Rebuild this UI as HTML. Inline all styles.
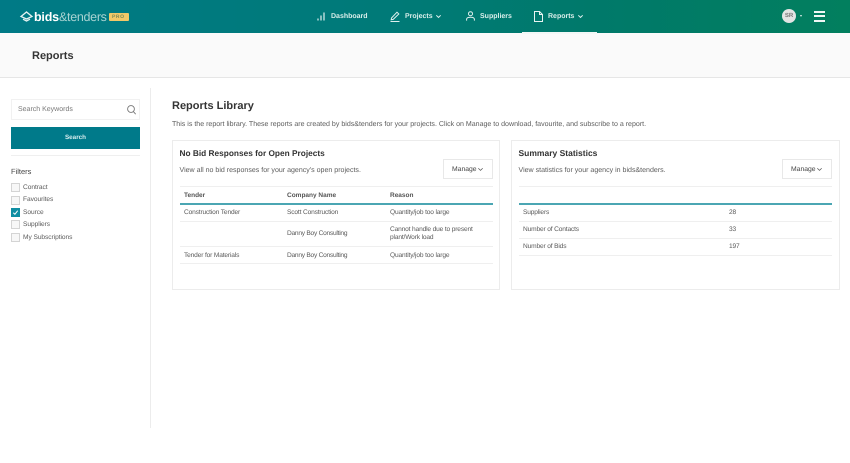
<!DOCTYPE html>
<html><head><meta charset="utf-8"><title>Reports</title>
<style>
html,body{margin:0;padding:0;background:#fff;}
body{width:850px;height:463px;position:relative;overflow:hidden;font-family:"Liberation Sans",sans-serif;color:#555;text-rendering:geometricPrecision;}
.t{position:absolute;white-space:nowrap;font-size:6.6px;letter-spacing:-.05px;line-height:10px;color:#5a5a5a;}
.c{letter-spacing:-.15px;}
.dn{letter-spacing:-.25px;}
.b{position:absolute;}
.nav{color:#d8eeea;font-size:7px;font-weight:bold;line-height:10px;letter-spacing:0;}
.h{font-size:8.3px;font-weight:bold;color:#333;line-height:12px;letter-spacing:0;}
.d{font-size:7.05px;color:#5c5c5c;letter-spacing:0;}
.th{font-weight:bold;color:#555;font-size:6.5px;letter-spacing:0;}
.line{position:absolute;height:1px;background:#efefef;}
.teal{position:absolute;height:2px;background:#4ba6b3;}
.card{position:absolute;background:#fff;border:1px solid #ececec;box-sizing:border-box;}
.mg{position:absolute;width:50px;height:20px;background:#fff;border:1px solid #e8e8e8;box-sizing:border-box;font-size:6.8px;color:#444;line-height:19px;padding-left:8px;}
.cb{position:absolute;left:11px;width:9px;height:9px;background:#f7f7f7;border:1px solid #d4d4d4;box-sizing:border-box;}
svg{position:absolute;overflow:visible;}
</style></head><body>
<div class="b" style="left:0;top:0;width:850px;height:33px;background:linear-gradient(90deg,#007a86 0%,#007a78 45%,#00796a 70%,#027f5e 100%);"></div>
<div class="b" style="left:0;top:33px;width:850px;height:45px;background:#fafafa;border-bottom:1px solid #e6e6e6;box-sizing:border-box;"></div>

<!-- logo -->
<svg style="left:20px;top:11px" width="13" height="11" viewBox="0 0 13 11" fill="none" stroke="#e6f3f2" stroke-width="1.3"><path d="M1 5.5 6.5 1 12 5.5 6.5 8Z"/><path d="M3 8.2 6.5 10 10 8.2"/></svg>
<span class="t" style="left:34px;top:10px;font-size:12.5px;line-height:14px;font-weight:bold;color:#fff;letter-spacing:-.2px;">bids</span>
<span class="t" style="left:59px;top:10px;font-size:12.5px;line-height:14px;color:#a9d3d2;letter-spacing:-.3px;">&amp;tenders</span>
<div class="b" style="left:109px;top:13px;width:20px;height:8px;background:#f2c868;border-radius:1px;"></div>
<span class="t" style="left:112px;top:13px;font-size:5px;line-height:8px;font-weight:bold;color:#7c8a55;letter-spacing:.6px;">PRO</span>

<!-- nav -->
<svg style="left:317px;top:12px" width="8" height="9" viewBox="0 0 8 9" stroke="#dff0ee" stroke-width="1.2" fill="none"><path d="M1 6.5V8.5M4 3.5V8.5M7 .5V8.5"/></svg>
<span class="t nav" style="left:331px;top:11.5px;">Dashboard</span>
<svg style="left:390px;top:11px" width="10" height="11" viewBox="0 0 10 11" stroke="#dff0ee" stroke-width="1" fill="none"><path d="M1.5 7 7 1.2 8.8 3 3.2 8.4 1.2 8.8Z"/><path d="M.5 10.5H9.5"/></svg>
<span class="t nav" style="left:405px;top:12px;">Projects</span>
<svg style="left:436px;top:15px" width="5" height="3" viewBox="0 0 5 3" stroke="#dff0ee" stroke-width="1" fill="none"><path d="M.3.3 2.5 2.4 4.7.3"/></svg>
<svg style="left:466px;top:11px" width="9" height="10" viewBox="0 0 9 10" stroke="#dff0ee" stroke-width="1" fill="none"><circle cx="4.5" cy="2.7" r="2"/><path d="M.6 9.6V8.4C.6 7 1.8 6.3 4.5 6.3S8.4 7 8.4 8.4V9.6"/></svg>
<span class="t nav" style="left:480px;top:11.5px;">Suppliers</span>
<svg style="left:534px;top:11px" width="9" height="11" viewBox="0 0 9 11" stroke="#e8f4f2" stroke-width="1" fill="none"><path d="M.5.5H5.5L8.5 3.5V10.5H.5Z"/><path d="M5.5.5V3.5H8.5"/></svg>
<span class="t nav" style="left:548px;top:12px;">Reports</span>
<svg style="left:578px;top:15px" width="5" height="3" viewBox="0 0 5 3" stroke="#dff0ee" stroke-width="1" fill="none"><path d="M.3.3 2.5 2.4 4.7.3"/></svg>
<div class="b" style="left:522px;top:32px;width:75px;height:2px;background:#f2f7f6;"></div>

<!-- user -->
<div class="b" style="left:782px;top:9px;width:14px;height:14px;border-radius:50%;background:#e2e4e3;color:#777;font-size:6px;font-weight:bold;line-height:14px;text-align:center;">SR</div>
<div class="b" style="left:800px;top:15px;width:0;height:0;border-left:1.5px solid transparent;border-right:1.5px solid transparent;border-top:2px solid #e6f2ef;"></div>
<div class="b" style="left:814px;top:11px;width:11px;height:2px;background:#f0f7f5;"></div>
<div class="b" style="left:814px;top:15px;width:11px;height:2px;background:#f0f7f5;"></div>
<div class="b" style="left:814px;top:19.5px;width:11px;height:2px;background:#f0f7f5;"></div>

<span class="t" style="left:32px;top:49px;font-size:11px;line-height:14px;font-weight:bold;color:#333;letter-spacing:0;">Reports</span>

<!-- sidebar -->
<div class="b" style="left:150px;top:88px;width:1px;height:340px;background:#ececec;"></div>
<div class="b" style="left:11px;top:99px;width:129px;height:21px;background:#fff;border:1px solid #f1f1f1;box-sizing:border-box;"></div>
<span class="t" style="left:18px;top:104.5px;font-size:7px;color:#777;letter-spacing:0;">Search Keywords</span>
<svg style="left:127px;top:105px" width="9" height="10" viewBox="0 0 9 10" stroke="#777" stroke-width=".9" fill="none"><circle cx="4" cy="4" r="3.4"/><path d="M6.5 6.7 8.7 9.2"/></svg>
<div class="b" style="left:11px;top:127px;width:129px;height:21.5px;background:#007a8a;color:#d8eef0;font-size:6.3px;font-weight:bold;line-height:21px;text-align:center;">Search</div>
<div class="line" style="left:11px;top:155px;width:129px;"></div>
<span class="t" style="left:11px;top:166.5px;font-size:7.5px;color:#444;letter-spacing:0;">Filters</span>
<div class="cb" style="top:183px;"></div><span class="t" style="left:23px;top:182.5px;">Contract</span>
<div class="cb" style="top:195.5px;"></div><span class="t" style="left:23px;top:195px;">Favourites</span>
<div class="cb" style="top:208px;background:#108ea3;border-color:#108ea3;"></div>
<svg style="left:13px;top:210px" width="5" height="5" viewBox="0 0 5 5" stroke="#fff" stroke-width="1" fill="none"><path d="M.3 2.8 1.9 4.3 4.7.7"/></svg>
<span class="t" style="left:23px;top:207.5px;">Source</span>
<div class="cb" style="top:220px;"></div><span class="t" style="left:23px;top:220px;">Suppliers</span>
<div class="cb" style="top:232.5px;"></div><span class="t" style="left:23px;top:232.5px;">My Subscriptions</span>

<!-- main -->
<span class="t" style="left:172px;top:99px;font-size:11px;line-height:15px;font-weight:bold;color:#333;letter-spacing:0;">Reports Library</span>
<span class="t d" style="left:172px;top:120px;">This is the report library. These reports are created by bids&amp;tenders for your projects. Click on Manage to download, favourite, and subscribe to a report.</span>

<!-- card 1 -->
<div class="card" style="left:172px;top:140px;width:328px;height:150px;"></div>
<span class="t h" style="left:179.5px;top:147px;">No Bid Responses for Open Projects</span>
<span class="t d" style="left:179.5px;top:165.5px;">View all no bid responses for your agency's open projects.</span>
<div class="mg" style="left:443px;top:159px;">Manage</div>
<svg style="left:478px;top:168px" width="5" height="3" viewBox="0 0 5 3" stroke="#555" stroke-width=".7" fill="none"><path d="M.3.3 2.5 2.4 4.7.3"/></svg>
<div class="line" style="left:179.5px;top:186px;width:313px;"></div>
<span class="t th" style="left:184px;top:190.5px;">Tender</span>
<span class="t th" style="left:287px;top:190.5px;">Company Name</span>
<span class="t th" style="left:390px;top:190.5px;">Reason</span>
<div class="teal" style="left:179.5px;top:203px;width:313px;"></div>
<span class="t c" style="left:184px;top:207.5px;">Construction Tender</span>
<span class="t c" style="left:287px;top:207.5px;">Scott Construction</span>
<span class="t c" style="left:390px;top:207.5px;">Quantity/job too large</span>
<div class="line" style="left:179.5px;top:221px;width:313px;"></div>
<span class="t dn" style="left:287px;top:229px;">Danny Boy Consulting</span>
<span class="t c" style="left:390px;top:225.5px;line-height:8px;">Cannot handle due to present<br>plant/Work load</span>
<div class="line" style="left:179.5px;top:246px;width:313px;"></div>
<span class="t c" style="left:184px;top:250.5px;">Tender for Materials</span>
<span class="t dn" style="left:287px;top:250.5px;">Danny Boy Consulting</span>
<span class="t c" style="left:390px;top:250.5px;">Quantity/job too large</span>
<div class="line" style="left:179.5px;top:263px;width:313px;"></div>

<!-- card 2 -->
<div class="card" style="left:511px;top:140px;width:329px;height:150px;"></div>
<span class="t h" style="left:518.5px;top:147px;font-size:8.5px;">Summary Statistics</span>
<span class="t d" style="left:518.5px;top:165.5px;">View statistics for your agency in bids&amp;tenders.</span>
<div class="mg" style="left:782px;top:159px;">Manage</div>
<svg style="left:817px;top:168px" width="5" height="3" viewBox="0 0 5 3" stroke="#555" stroke-width=".7" fill="none"><path d="M.3.3 2.5 2.4 4.7.3"/></svg>
<div class="line" style="left:518.5px;top:186px;width:313px;"></div>
<div class="teal" style="left:518.5px;top:203px;width:313px;"></div>
<span class="t c" style="left:523px;top:207.5px;">Suppliers</span>
<span class="t c" style="left:729px;top:207.5px;">28</span>
<div class="line" style="left:518.5px;top:221px;width:313px;"></div>
<span class="t c" style="left:523px;top:225px;">Number of Contacts</span>
<span class="t c" style="left:729px;top:225px;">33</span>
<div class="line" style="left:518.5px;top:238px;width:313px;"></div>
<span class="t c" style="left:523px;top:242px;">Number of Bids</span>
<span class="t c" style="left:729px;top:242px;">197</span>
<div class="line" style="left:518.5px;top:255px;width:313px;"></div>
</body></html>
